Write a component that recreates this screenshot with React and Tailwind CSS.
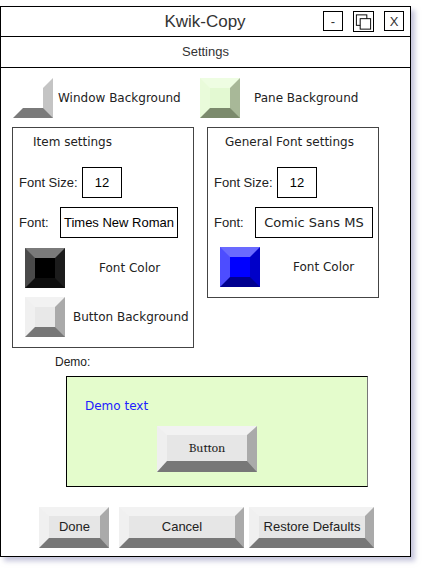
import React from 'react'

const comic = "font-['Comic_Sans_MS','DejaVu_Sans',sans-serif] text-[12px] text-[#222]"
const arial = "font-['Liberation_Sans',Arial,sans-serif]"

// a bevelled square drawn with four coloured borders
const Swatch = ({ face, top, left, right, bottom }) => (
  <div
    className="w-[40px] h-[40px] border-[10px] box-border shrink-0"
    style={{
      backgroundColor: face,
      borderTopColor: top,
      borderLeftColor: left,
      borderRightColor: right,
      borderBottomColor: bottom,
    }}
  />
)

const BevelButton = ({ children, className = '' }) => (
  <div
    className={`flex items-center justify-center box-border h-[41px] bg-[#e6e6e6] border-solid border-t-[9px] border-l-[10px] border-r-[9px] border-b-[10px] border-t-[#f2f2f2] border-l-[#f0f0f0] border-r-[#aaaaaa] border-b-[#777777] text-[13px] text-[#222] ${arial} ${className}`}
  >
    {children}
  </div>
)

const Field = ({ children, className = '' }) => (
  <div className={`h-[31px] box-border border border-black flex items-center justify-center text-[13px] ${className}`}>
    {children}
  </div>
)

const RestoreIcon = () => (
  <svg width="20" height="20" viewBox="0 0 20 20">
    <rect x="2.5" y="2.5" width="11" height="11" fill="white" stroke="black" strokeWidth="1" />
    <rect x="6.5" y="6.5" width="11" height="11" fill="white" stroke="black" strokeWidth="1" />
  </svg>
)

export default function App() {
  return (
    <div className="w-[423px] h-[568px] bg-white pt-[6px]">
      <div className={`w-[411px] h-[551px] box-border border border-black bg-white flex flex-col shadow-[4px_4px_5px_rgba(150,150,190,0.55)] ${arial}`}>
        {/* title bar */}
        <div className="h-[30px] border-b border-black flex items-center">
          <div className="w-[86px]" />
          <div className="flex-1 text-center text-[17px] text-[#333]">Kwik-Copy</div>
          <div className="flex gap-[10px] pr-[6px]">
            <div className="w-[20px] h-[20px] border border-black flex items-center justify-center text-[13px] text-[#333] leading-none">-</div>
            <div className="w-[21px] h-[21px] border border-black flex items-center justify-center">
              <RestoreIcon />
            </div>
            <div className="w-[20px] h-[20px] border border-black flex items-center justify-center text-[13px] text-[#333] leading-none">X</div>
          </div>
        </div>

        {/* sub header */}
        <div className="h-[31px] border-b border-black flex items-center justify-center text-[13px] text-[#333]">
          Settings
        </div>

        {/* background swatches */}
        <div className="flex items-center pl-[12px] mt-[10px]">
          <div className="flex items-center w-[187px] gap-[5px]">
            <Swatch face="#ffffff" top="#ffffff" left="#ffffff" right="#c4c4c4" bottom="#7a7a7a" />
            <span className={comic}>Window Background</span>
          </div>
          <div className="flex items-center gap-[14px]">
            <Swatch face="#e3f9d2" top="#eefde2" left="#e9fbda" right="#a8b898" bottom="#7b8a6c" />
            <span className={comic}>Pane Background</span>
          </div>
        </div>

        {/* settings groups */}
        <div className="flex items-start mt-[9px] pl-[11px] gap-[13px]">
          <div className="w-[182px] h-[221px] box-border border border-[#444] pt-[6px] pl-[6px] flex flex-col">
            <div className={`${comic} leading-[16px] pl-[14px]`}>Item settings</div>
            <div className="flex items-center mt-[17px]">
              <span className="w-[63px] text-[13px] text-[#222]">Font Size:</span>
              <Field className="w-[40px]">12</Field>
            </div>
            <div className="flex items-center mt-[9px]">
              <span className="w-[41px] text-[13px] text-[#222]">Font:</span>
              <Field className="w-[118px]">Times New Roman</Field>
            </div>
            <div className="flex items-center mt-[10px] ml-[6px] gap-[34px]">
              <Swatch face="#000000" top="#7a7a7a" left="#4a4a4a" right="#1c1c1c" bottom="#0e0e0e" />
              <span className={comic}>Font Color</span>
            </div>
            <div className="flex items-center mt-[9px] ml-[6px] gap-[8px]">
              <Swatch face="#e8e8e8" top="#f2f2f2" left="#f0f0f0" right="#aaaaaa" bottom="#777777" />
              <span className={comic}>Button Background</span>
            </div>
          </div>

          <div className="w-[172px] h-[171px] box-border border border-[#444] pt-[6px] pl-[6px] flex flex-col">
            <div className={`${comic} leading-[16px] pl-[11px]`}>General Font settings</div>
            <div className="flex items-center mt-[17px]">
              <span className="w-[63px] text-[13px] text-[#222]">Font Size:</span>
              <Field className="w-[40px]">12</Field>
            </div>
            <div className="flex items-center mt-[9px]">
              <span className="w-[41px] text-[13px] text-[#222]">Font:</span>
              <Field className={`w-[118px] ${comic}`}>Comic Sans MS</Field>
            </div>
            <div className="flex items-center mt-[9px] ml-[6px] gap-[33px]">
              <Swatch face="#0000ff" top="#6a6aff" left="#4d4dff" right="#0000c8" bottom="#000090" />
              <span className={comic}>Font Color</span>
            </div>
          </div>
        </div>

        {/* demo */}
        <div className="pl-[54px] mt-[6px] text-[12px] leading-[16px] text-[#222]">Demo:</div>
        <div className="ml-[65px] mt-[6px] w-[302px] h-[111px] box-border border border-black border-r-[#777] bg-[#e4fccc] flex flex-col">
          <div className="pl-[18px] pt-[21px] font-['Comic_Sans_MS','DejaVu_Sans',sans-serif] text-[12px] leading-[16px] text-[#2020ff]">
            Demo text
          </div>
          <div className="pl-[90px] mt-[12px]">
            <div className="w-[100px] h-[46px] box-border bg-[#e6e6e6] border-solid border-t-[9px] border-l-[10px] border-r-[10px] border-b-[11px] border-t-[#f2f2f2] border-l-[#efefef] border-r-[#aaaaaa] border-b-[#777777] flex items-center justify-center font-serif font-[family-name:'Liberation_Serif','Times_New_Roman',serif] text-[13px] text-[#222]">
              Button
            </div>
          </div>
        </div>

        {/* action buttons */}
        <div className="mt-auto mb-[8px] flex pl-[38px] gap-[10px]">
          <BevelButton className="w-[70px]">Done</BevelButton>
          <BevelButton className="w-[125px]">Cancel</BevelButton>
          <BevelButton className="w-[125px] -ml-[5px]">Restore Defaults</BevelButton>
        </div>
      </div>
    </div>
  )
}
